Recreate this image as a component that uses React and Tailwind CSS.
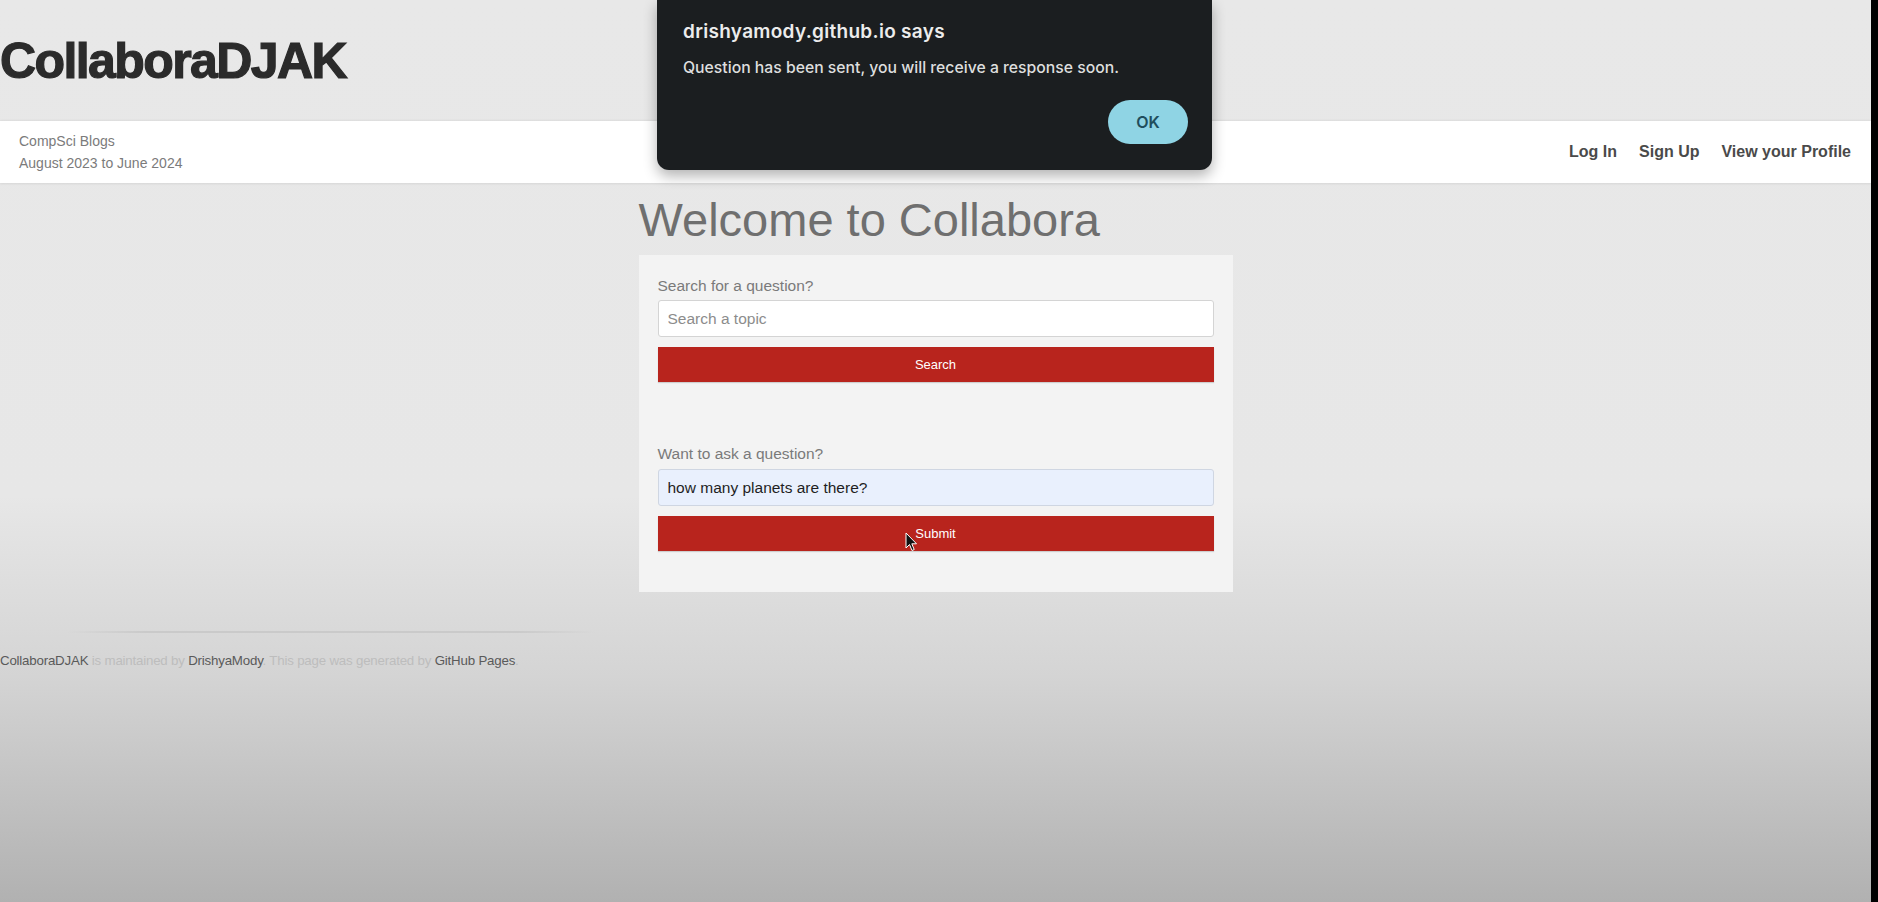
// Pagina de Collabora con el aviso del navegador abierto encima
export default function App() {
  return (
    <div className="flex h-[902px] overflow-hidden bg-black font-['Liberation_Sans',Arial,sans-serif]">
      <div className="relative flex flex-1 flex-col bg-[linear-gradient(180deg,#e8e8e8_0%,#e7e7e7_55%,#d4d4d4_75%,#b1b1b1_100%)]">
        {/* CABECERA */}
        <header className="flex h-[121px] shrink-0 items-center">
          <h1 className="text-[50px] leading-none font-black tracking-[-1.6px] text-[#2b2b2b] [-webkit-text-stroke:1.2px_#2b2b2b]">CollaboraDJAK</h1>
        </header>

        {/* BARRA DE NAVEGACION */}
        <nav className="flex h-[62px] shrink-0 items-center justify-between bg-white pl-[19px] pr-[20px] shadow-[0_1px_2px_rgba(0,0,0,0.08),0_-1px_2px_rgba(0,0,0,0.05)]">
          <div className="text-[14px] leading-[22px] text-[#7b7b7b]">
            <p>CompSci Blogs</p>
            <p>August 2023 to June 2024</p>
          </div>
          <div className="flex gap-[22px] text-[16px] font-bold text-[#4a4a4a]">
            <a>Log In</a>
            <a>Sign Up</a>
            <a>View your Profile</a>
          </div>
        </nav>

        {/* CONTENIDO */}
        <main className="flex flex-col items-center">
          <div className="w-[594px]">
            <h2 className="mt-[9px] mb-[7px] text-[47px] leading-[56px] text-[#6f6f6f]">Welcome to Collabora</h2>
            <div className="relative bg-[#f3f3f3] px-[19px] pt-[21px] pb-[41px]">
              <label className="mb-[4px] block text-[15.5px] leading-[20px] text-[#7a7a7a]">Search for a question?</label>
              <input
                placeholder="Search a topic"
                className="block h-[37px] w-full rounded-[3px] border border-[#d4d4d4] bg-white px-[9px] text-[15.5px] text-[#222] placeholder:text-[#8c8c8c] outline-none"
              />
              <button className="mt-[10px] block h-[35px] w-full bg-[#b8241d] text-[13px] text-white shadow-[0_1px_1px_rgba(0,0,0,0.15)]">Search</button>

              <label className="mt-[62px] mb-[5px] block text-[15.5px] leading-[20px] text-[#7a7a7a]">Want to ask a question?</label>
              <input
                defaultValue="how many planets are there?"
                className="block h-[37px] w-full rounded-[3px] border border-[#cfd6e2] bg-[#e9f0fd] px-[9px] text-[15.5px] text-[#1f1f1f] outline-none"
              />
              <button className="mt-[10px] block h-[35px] w-full bg-[#b8241d] text-[13px] text-white shadow-[0_1px_1px_rgba(0,0,0,0.15)]">Submit</button>

              {/* puntero del raton sobre el boton */}
              <svg className="absolute left-[266px] top-[277px]" width="13" height="20" viewBox="0 0 13 20">
                <path d="M1 1 L1 16 L4.5 12.5 L7 18.5 L9.2 17.5 L6.8 11.8 L11.5 11.8 Z" fill="#111" stroke="#fff" strokeWidth="1" />
              </svg>
            </div>
          </div>
        </main>

        {/* PIE */}
        <footer className="mt-[39px]">
          <div className="ml-[66px] h-[2px] w-[530px] bg-[linear-gradient(90deg,transparent,#cacaca_15%,#cacaca_85%,transparent)]" />
          <p className="mt-[18px] text-[13.3px] leading-[20px] tracking-[-0.2px] text-[#bdbdbd]">
            <a className="text-[#5a5a5a]">CollaboraDJAK</a> is maintained by <a className="text-[#5a5a5a]">DrishyaMody</a>. This page was generated by <a className="text-[#5a5a5a]">GitHub Pages</a>.
          </p>
        </footer>

        {/* ALERTA DEL NAVEGADOR */}
        <div className="absolute top-0 left-[657px] flex h-[170px] w-[555px] flex-col rounded-b-[12px] bg-[#1b1e20] pl-[26px] pr-[24px] pt-[19px] font-['Inter',sans-serif] shadow-[0_6px_14px_rgba(0,0,0,0.3)]">
          <p className="text-[19px] leading-[26px] tracking-[0.3px] font-semibold text-[#ececec]">drishyamody.github.io says</p>
          <p className="mt-[13px] text-[15.75px] leading-[20px] font-medium text-[#dedede]">Question has been sent, you will receive a response soon.</p>
          <div className="mt-[22px] flex justify-end">
            <button className="h-[44px] w-[80px] rounded-full bg-[#8fd4e4] text-[16px] font-semibold text-[#1f4e5c]">OK</button>
          </div>
        </div>
      </div>
      <div className="w-[7px] shrink-0 bg-black" />
    </div>
  );
}
